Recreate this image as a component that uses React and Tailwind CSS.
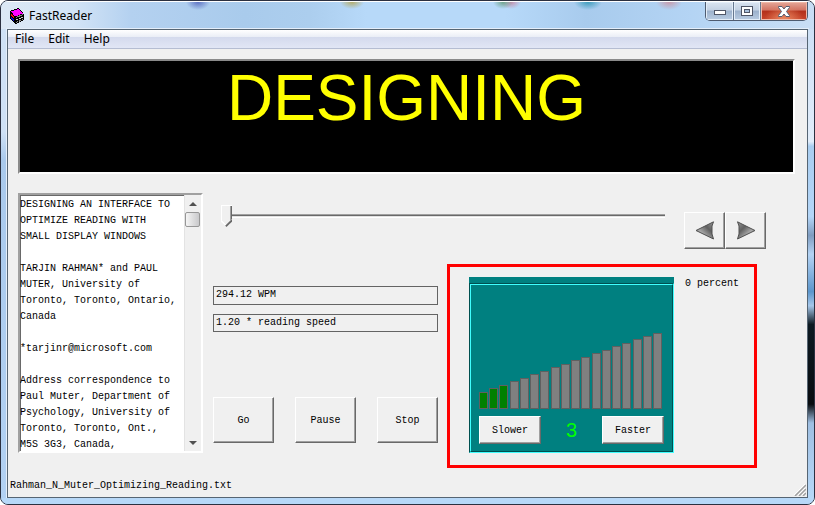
import React, { useState } from 'react';

const articleText = `DESIGNING AN INTERFACE TO
OPTIMIZE READING WITH
SMALL DISPLAY WINDOWS

TARJIN RAHMAN* and PAUL
MUTER, University of
Toronto, Toronto, Ontario,
Canada

*tarjinr@microsoft.com

Address correspondence to
Paul Muter, Department of
Psychology, University of
Toronto, Toronto, Ont.,
M5S 3G3, Canada,`;

const barHeights = [17, 21, 24, 28, 31, 35, 38, 42, 45, 49, 52, 56, 59, 63, 66, 70, 73, 76];

const AppIcon = () => (
  <svg className="w-4 h-4" viewBox="0 0 16 16" shapeRendering="crispEdges" aria-hidden="true">
    <path d="M1 3 L9 0 L14 5 L15 7 L15 12 L7 16 L5 15 L1 10 Z" fill="#000" />
    <path d="M2 3.500 L9 1 L13.500 5.500 L6 8.500 Z" fill="#ff00ff" />
    <path d="M2 5 L5 8.500 V11 L2 7.500 Z" fill="#f01010" />
    <path d="M2 8 L5 11.500 V14 L2 10.500 Z" fill="#1010d0" />
    <path d="M7 9.500 L14 6.500" stroke="#808080" />
    <path d="M7 12 L14 9" stroke="#c8c8c8" strokeDasharray="2 1" />
    <path d="M7 14.500 L14 11.500" stroke="#909090" strokeDasharray="2 1" />
  </svg>
);

const TitleBar = () => (
  <header className="flex h-7 items-start justify-between bg-[radial-gradient(ellipse_12px_8px_at_197px_0px,#5f74c4,transparent),radial-gradient(ellipse_12px_7px_at_351px_0px,#b3ad6c,transparent),radial-gradient(ellipse_10px_7px_at_502px_0px,#6ea48c,transparent),radial-gradient(ellipse_10px_7px_at_510px_0px,#c58fae,transparent),radial-gradient(ellipse_14px_8px_at_587px_0px,#3f9dbd,transparent),radial-gradient(ellipse_13px_8px_at_668px_0px,#c79cae,transparent),linear-gradient(90deg,#dce8f5_0%,#d3e4f6_9%,#b4d1f0_16%,#a9cbec_30%,#acceee_38%,#b7d9f9_45%,#b7d9f9_62%,#a8cbed_72%,#b4d4f4_85%,#c9def5_100%)] border-t border-white">
    <div className="flex items-center gap-1 pl-2 pt-1">
      <AppIcon />
      <h1 className="text-xs leading-5 text-black">FastReader</h1>
    </div>
    <div className="mr-[6px] flex h-[19px] overflow-hidden rounded-b-[5px] border border-t-0 border-[#4e5b70]">
      <button aria-label="Minimize" className="flex w-7 items-center justify-center border-r border-[#67788f] bg-[linear-gradient(#dbe5f1_0%,#c3d1e3_45%,#9cb1cc_50%,#b9cce2_100%)] shadow-[inset_0_0_0_1px_#e3edf8]">
        <svg width="12" height="6" viewBox="0 0 12 6" className="mt-1" shapeRendering="crispEdges">
          <rect x="0.5" y="0.5" width="11" height="4" fill="#fff" stroke="#4f5566" />
        </svg>
      </button>
      <button aria-label="Maximize" className="flex w-[27px] items-center justify-center border-r border-[#67788f] bg-[linear-gradient(#dbe5f1_0%,#c3d1e3_45%,#9cb1cc_50%,#b9cce2_100%)] shadow-[inset_0_0_0_1px_#e3edf8]">
        <svg width="12" height="10" viewBox="0 0 12 10" shapeRendering="crispEdges">
          <rect x="0.5" y="0.5" width="11" height="9" fill="#fff" stroke="#4f5566" />
          <rect x="3.5" y="3.5" width="5" height="3" fill="#a9c0dc" stroke="#4f5566" />
        </svg>
      </button>
      <button aria-label="Close" className="flex w-[46px] items-center justify-center bg-[radial-gradient(ellipse_at_bottom,#ec8a62_0%,transparent_60%),linear-gradient(#e5a899_0%,#d27363_45%,#b3301b_50%,#c8452b_100%)] shadow-[inset_0_0_0_1px_#f0b8a8]">
        <svg width="12" height="11" viewBox="0 0 12 11">
          <path d="M0.500 0.500 H4 L6 3 L8 0.500 H11.500 V1.500 L8.500 5.500 L11.500 9.500 V10.500 H8 L6 8 L4 10.500 H0.500 V9.500 L3.500 5.500 L0.500 1.500 Z" fill="#fff" stroke="#565c70" />
        </svg>
      </button>
    </div>
  </header>
);

const MenuBar = () => (
  <nav className="flex h-[19px] items-center gap-[14px] border-b border-[#b5bdd2] bg-[linear-gradient(#ffffff_0%,#eaeef6_38%,#d4daed_40%,#e1e6f5_100%)] px-[7px] text-xs text-black">
    <button>File</button>
    <button>Edit</button>
    <button>Help</button>
  </nav>
);

const PushButton = ({ children, className = '', ...props }) => (
  <button
    className={`flex items-center justify-center border border-t-white border-l-white border-r-[#696969] border-b-[#696969] bg-[#f0f0f0] shadow-[inset_-1px_-1px_0_#a0a0a0] ${className}`}
    {...props}
  >
    {children}
  </button>
);

const ArticlePane = () => (
  <section className="flex h-[260px] w-[185px] shrink-0 border-2 border-t-[#a0a0a0] border-l-[#a0a0a0] border-r-white border-b-white bg-white shadow-[inset_1px_1px_0_#696969]">
    <textarea
      aria-label="Article"
      readOnly
      defaultValue={articleText}
      className="min-w-0 flex-1 resize-none overflow-hidden whitespace-pre bg-transparent pt-[2px] leading-4 outline-none"
    />
    <div className="flex w-[17px] flex-col items-start border-l border-[#e3e3e3] bg-[#f0f0f0]">
      <button aria-label="Scroll up" className="flex h-[17px] w-full items-center justify-center">
        <svg width="8" height="4" viewBox="0 0 8 4"><path d="M4 0 L8 4 H0 Z" fill="#505050" /></svg>
      </button>
      <div className="h-[15px] w-[15px] rounded-[2px] border border-[#979797] bg-linear-to-r from-[#f5f5f5] to-[#c9c9cb]" />
      <button aria-label="Scroll down" className="mt-auto flex h-[17px] w-full items-center justify-center">
        <svg width="8" height="4" viewBox="0 0 8 4"><path d="M0 0 H8 L4 4 Z" fill="#505050" /></svg>
      </button>
    </div>
  </section>
);

const PositionSlider = ({ value, onChange }) => (
  <input
    type="range"
    aria-label="Position"
    min="0"
    max="100"
    value={value}
    onChange={onChange}
    className="mt-3 h-[22px] min-w-0 flex-1 appearance-none bg-transparent [&::-webkit-slider-runnable-track]:h-1 [&::-webkit-slider-runnable-track]:bg-[linear-gradient(#a0a0a0_1px,#696969_1px,#696969_2px,#e3e3e3_2px,#e3e3e3_3px,#ffffff_3px)] [&::-webkit-slider-thumb]:-mt-[9px] [&::-webkit-slider-thumb]:h-[22px] [&::-webkit-slider-thumb]:w-[11px] [&::-webkit-slider-thumb]:appearance-none [&::-webkit-slider-thumb]:bg-[linear-gradient(315deg,#696969_5px,#a0a0a0_5px,#a0a0a0_6px,transparent_6px),linear-gradient(45deg,#ffffff_5px,transparent_5px),linear-gradient(#ffffff_1px,transparent_1px),linear-gradient(90deg,#ffffff_1px,#f0f0f0_1px,#f0f0f0_9px,#a0a0a0_9px,#a0a0a0_10px,#696969_10px)] [&::-webkit-slider-thumb]:[clip-path:polygon(0_0,100%_0,100%_75%,50%_100%,0_75%)]"
  />
);

const ArrowIcon = ({ flip }) => (
  <svg width="20" height="19" viewBox="0 0 20 19" className={flip ? '-scale-x-100' : ''}>
    <defs>
      <linearGradient id="arrowShade" x1="0" y1="1" x2="1" y2="0">
        <stop offset="0" stopColor="#5c5c5c" />
        <stop offset="0.35" stopColor="#a8a8a8" />
        <stop offset="0.65" stopColor="#606060" />
        <stop offset="1" stopColor="#9a9a9a" />
      </linearGradient>
    </defs>
    <path d="M1 9.500 L18.500 0.800 L17 5 V13 L18.500 18 Z" fill="url(#arrowShade)" stroke="#505050" />
  </svg>
);

const SpeedPanel = ({ speed, setSpeed }) => (
  <div className="w-[205px] bg-[#008080] pt-[6px]">
    <div className="border border-t-[#005050] border-l-[#005050] border-r-[#40ffff] border-b-[#40ffff]">
      <div className="border border-t-[#40ffff] border-l-[#40ffff] border-r-[#005050] border-b-[#005050] px-2 pt-12 pb-[7px]">
        <div className="flex items-end justify-between pr-[2px]">
          {barHeights.map((height, i) => (
            <div
              key={i}
              className={`w-[9px] border border-[#606060] ${i < speed ? 'bg-[#008000]' : 'bg-[#808080]'}`}
              style={{ height }}
            />
          ))}
        </div>
        <div className="mt-[7px] flex items-center justify-between">
          <PushButton className="h-7 w-[62px]" onClick={() => setSpeed(Math.max(1, speed - 1))}>Slower</PushButton>
          <output className="font-['Liberation_Sans',sans-serif] text-xl leading-none text-[#00ff00]">{speed}</output>
          <PushButton className="h-7 w-[62px]" onClick={() => setSpeed(Math.min(barHeights.length, speed + 1))}>Faster</PushButton>
        </div>
      </div>
    </div>
  </div>
);

const App = () => {
  const [position, setPosition] = useState(0);
  const [speed, setSpeed] = useState(3);

  return (
    <div className="flex min-h-screen flex-col overflow-hidden rounded-lg border border-[#2b3040] bg-[#bad6f5] font-['Noto_Sans',sans-serif]">
      <TitleBar />
      <div className="flex flex-1">
        <div className="w-[6px] bg-[linear-gradient(#cfe1f5_0%,#cfe1f5_22%,#a9c9ec_28%,#b2d1f3_100%)]" />
        <main className="flex min-w-0 flex-1 flex-col border border-[#566573] bg-[#f0f0f0] shadow-[0_0_0_1px_#e4eefa]">
          <MenuBar />
          <div className="flex flex-1 flex-col pt-[10px] pr-3 pl-[10px] font-['Liberation_Mono',monospace] text-[10px] text-black">
            <div className="h-[115px] overflow-hidden border-2 border-t-[#8a8a8a] border-l-[#8a8a8a] border-r-white border-b-white bg-black text-center font-['Liberation_Sans',sans-serif] text-[64px] leading-[74px] text-[#ffff00]">
              DESIGNING
            </div>

            <div className="mt-[19px] flex gap-[10px]">
              <ArticlePane />
              <div className="min-w-0 flex-1 pr-[29px]">
                <div className="flex items-start pl-2">
                  <PositionSlider value={position} onChange={(e) => setPosition(e.target.value)} />
                  <div className="mt-[19px] ml-[19px] flex">
                    <PushButton aria-label="Previous" className="h-[37px] w-[41px]"><ArrowIcon /></PushButton>
                    <PushButton aria-label="Next" className="h-[37px] w-[41px]"><ArrowIcon flip /></PushButton>
                  </div>
                </div>

                <div className="mt-[15px] flex items-start gap-[9px]">
                  <div className="w-[225px] shrink-0 pt-[22px]">
                    <input readOnly aria-label="Words per minute" value="294.12 WPM" className="block h-[19px] w-full border border-[#646464] bg-transparent px-[2px] pb-[3px] outline-none" />
                    <input readOnly aria-label="Relative speed" value="1.20 * reading speed" className="mt-[9px] block h-[18px] w-full border border-[#646464] bg-transparent px-[2px] pb-[2px] outline-none" />
                    <div className="mt-[65px] flex justify-between">
                      <PushButton className="h-[46px] w-[61px]">Go</PushButton>
                      <PushButton className="h-[46px] w-[61px]">Pause</PushButton>
                      <PushButton className="h-[46px] w-[61px]">Stop</PushButton>
                    </div>
                  </div>
                  <div className="mr-[9px] flex min-w-0 flex-1 items-start gap-[11px] border-[3px] border-[#ff0000] pt-[10px] pb-3 pl-[19px]">
                    <SpeedPanel speed={speed} setSpeed={setSpeed} />
                    <span className="whitespace-nowrap leading-[14px]">{position} percent</span>
                  </div>
                </div>
              </div>
            </div>
          </div>
          <footer className="flex items-end justify-between pb-[1px] pl-[2px] font-['Liberation_Mono',monospace] text-[10px] text-black">
            <span className="pb-[2px] leading-4">Rahman_N_Muter_Optimizing_Reading.txt</span>
            <svg width="12" height="12" viewBox="0 0 12 12" className="mr-[1px]">
              <path d="M0 11 L11 0 M4 11 L11 4 M8 11 L11 8" stroke="#fff" strokeWidth="1" />
              <path d="M1 12 L12 1 M5 12 L12 5 M9 12 L12 9" stroke="#a0a0a0" strokeWidth="1.5" />
            </svg>
          </footer>
        </main>
        <div className="w-[6px] bg-[linear-gradient(#cde0f6_0%,#e2edfa_24%,#a9cdf0_25%,#b4d6f8_40%,#7f9cc0_44%,#b4d3f4_48%,#5c96cc_56%,#a6c7ea_59%,#0d1a22_63%,#080c10_80%,#9fbfe2_84%,#b7d8f8_100%)]" />
      </div>
      <div className="h-[6px] bg-[#b7d8f8]" />
    </div>
  );
};

export default App;
